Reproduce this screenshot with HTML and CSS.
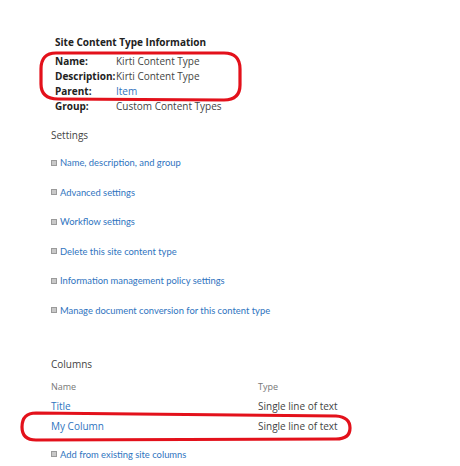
FILE: index.html
```html
<!DOCTYPE html>
<html>
<head>
<meta charset="utf-8">
<link rel="stylesheet" href="styles.css">
</head>
<body>
<div class="page">
  <section class="info">
    <div class="info-title">Site Content Type Information</div>
    <div class="info-grid">
      <div class="lbl">Name:</div><div class="val">Kirti Content Type</div>
      <div class="lbl">Description:</div><div class="val">Kirti Content Type</div>
      <div class="lbl">Parent:</div><div class="val"><a class="link">Item</a></div>
      <div class="lbl">Group:</div><div class="val">Custom Content Types</div>
    </div>
  </section>

  <section class="settings">
    <div class="section-title">Settings</div>
    <ul class="links">
      <li><span class="bullet"></span><a class="link">Name, description, and group</a></li>
      <li><span class="bullet"></span><a class="link">Advanced settings</a></li>
      <li><span class="bullet"></span><a class="link">Workflow settings</a></li>
      <li><span class="bullet"></span><a class="link">Delete this site content type</a></li>
      <li><span class="bullet"></span><a class="link">Information management policy settings</a></li>
      <li><span class="bullet"></span><a class="link">Manage document conversion for this content type</a></li>
    </ul>
  </section>

  <section class="columns">
    <div class="section-title">Columns</div>
    <div class="col-table">
      <div class="col-head">Name</div><div class="col-head">Type</div>
      <div><a class="link">Title</a></div><div class="col-type">Single line of text</div>
      <div><a class="link">My Column</a></div><div class="col-type">Single line of text</div>
    </div>
    <div class="add-row"><span class="bullet"></span><a class="link">Add from existing site columns</a></div>
  </section>

  <svg class="marks" width="460" height="466" viewBox="0 0 460 466">
    <path d="M56 53 L224 53 Q240 53 240 69 L240 85 Q240 100 224 100 L58 99 Q41 99 41 84 L41 69 Q41 53 56 53 Z" />
    <path d="M36 413 L336 416 Q350 417 350 428 Q350 439 336 439 L36 440 Q22 440 22 427 Q22 413 36 413 Z" />
  </svg>
</div>
</body>
</html>
```

FILE: styles.css
```css
html, body {
  margin: 0;
  padding: 0;
  background: #ffffff;
}
.page {
  position: relative;
  width: 460px;
  height: 466px;
  overflow: hidden;
  font-family: "Open Sans", "Noto Sans", sans-serif;
  font-size: 10px;
  line-height: 15px;
  color: #444444;
  padding-top: 35px;
  box-sizing: border-box;
}
.link {
  color: #2f74c0;
  text-decoration: none;
}
.info {
  padding-left: 55px;
}
.info-title {
  font-weight: 700;
  color: #222222;
  margin-bottom: 4px;
}
.info-grid {
  display: grid;
  grid-template-columns: 61px auto;
}
.lbl {
  font-weight: 700;
  color: #222222;
}
.val {
  color: #444444;
}
.settings {
  padding-left: 51px;
  margin-top: 14px;
}
.section-title {
  color: #444444;
}
.links {
  list-style: none;
  margin: 12px 0 0 0;
  padding: 0;
  display: flex;
  flex-direction: column;
  gap: 14.6px;
}
.links li, .add-row {
  display: flex;
  align-items: center;
  font-family: Lato, "Open Sans", sans-serif;
  font-size: 9.4px;
}
.bullet {
  width: 4px;
  height: 4px;
  background: #c8c8c8;
  border: 1px solid #9a9a9a;
  margin-right: 3px;
  flex: none;
}
.columns {
  padding-left: 51px;
  margin-top: 39px;
}
.col-table {
  display: grid;
  grid-template-columns: 207px auto;
  row-gap: 5px;
  margin-top: 7px;
}
.col-head {
  font-size: 9px;
  color: #777777;
}
.col-type {
  color: #444444;
}
.add-row {
  margin-top: 13px;
}
.marks {
  position: absolute;
  left: 0;
  top: 0;
  pointer-events: none;
}
.marks path {
  fill: none;
  stroke: #e3111b;
  stroke-width: 3.2;
}
```
